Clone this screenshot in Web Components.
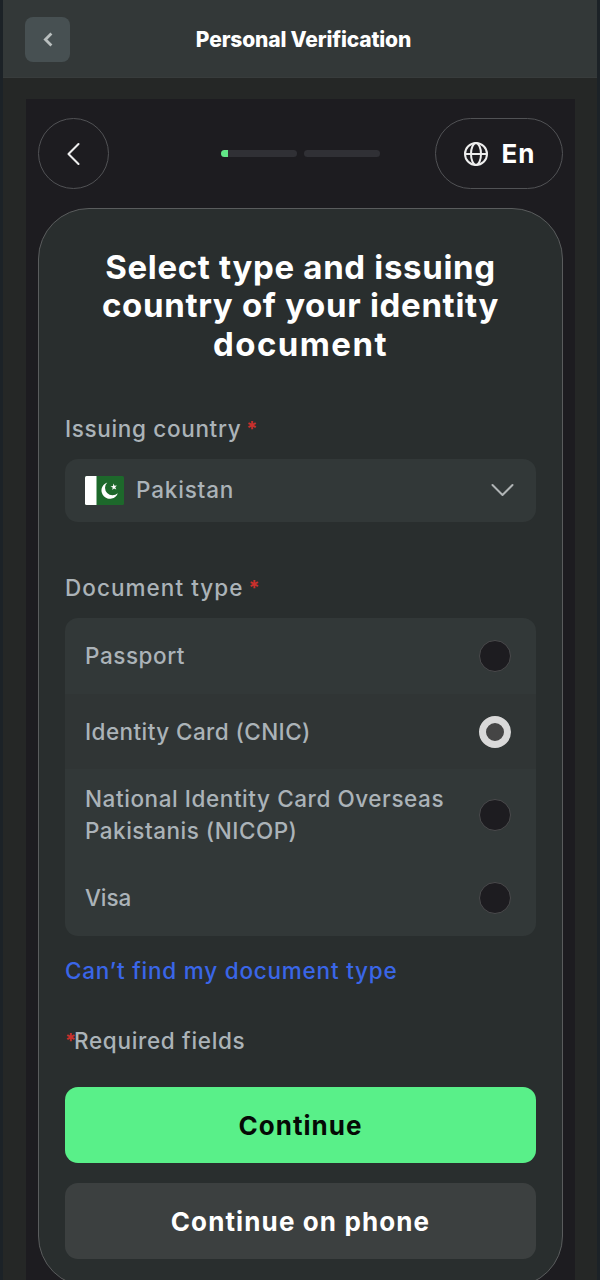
<!DOCTYPE html>
<html lang="en">
<head>
<meta charset="utf-8">
<title>Personal Verification</title>
<style>
    html, body {
        margin: 0;
        height: 1280px;
        overflow: hidden;
        background: #1c2227;
    }

    body {
        --panel: #1d1c20;
        --card: #292e2e;
        --field: #323838;
        --line: #4b4c4e;
        --muted: #abb3b8;
        --green: #59f089;
        --red: #c9302c;
        font-family: Inter, "Liberation Sans", sans-serif;
        color: #fff;
    }
</style>
</head>
<body>
<verify-page>
    <app-header slot="header">Personal Verification</app-header>
    <step-bar slot="top" lang-label="En"></step-bar>
    <verify-card>
        <card-title>
            <span style="letter-spacing: 0.66px">Select type and issuing</span>
            <span style="letter-spacing: 0.69px">country of your identity</span>
            <span style="letter-spacing: 1.45px">document</span>
        </card-title>
        <form-field label="Issuing country" spacing="0.66px">
            <country-select><span style="letter-spacing: 0.82px">Pakistan</span></country-select>
        </form-field>
        <form-field label="Document type" spacing="1.05px" style="margin-top: 50px">
            <option-list>
                <option-row style="height: 76px; letter-spacing: 0.55px">Passport</option-row>
                <option-row checked style="height: 75px; letter-spacing: 0.42px">Identity Card (CNIC)</option-row>
                <option-row style="height: 91px">
                    <span style="letter-spacing: 0.57px">National Identity Card Overseas</span><br>
                    <span style="letter-spacing: 0.5px">Pakistanis (NICOP)</span>
                </option-row>
                <option-row style="height: 76px; letter-spacing: -0.1px">Visa</option-row>
            </option-list>
        </form-field>
        <text-link>Can’t find my document type</text-link>
        <required-note>Required fields</required-note>
        <action-button primary style="letter-spacing: 1px">Continue</action-button>
        <action-button style="letter-spacing: 1.12px">Continue on phone</action-button>
    </verify-card>
</verify-page>

<script>
(function () {
    // Base class: clones the markup of the subclass into an open shadow root
    class BaseElement extends HTMLElement {
        constructor() {
            super();
            const template = document.createElement('template');
            template.innerHTML = this.constructor.markup;
            this.shadowroot = this.attachShadow({ mode: 'open' });
            this.shadowroot.appendChild(template.content.cloneNode(true));
        }
    }

    class VerifyPage extends BaseElement {
        static markup = `
        <style>
            :host {
                display: block;
                height: 1280px;
                margin: 0 3px;
                background: #252726;
                overflow: hidden;
            }

            .panel {
                box-sizing: border-box;
                height: 1181px;
                margin: 21px 22px 0 23px;
                padding: 19px 12px 0;
                background: var(--panel);
            }
        </style>
        <slot name="header"></slot>
        <div class="panel">
            <slot name="top"></slot>
            <slot></slot>
        </div>`;
    }

    class AppHeader extends BaseElement {
        static markup = `
        <style>
            :host {
                box-sizing: border-box;
                display: grid;
                grid-template-columns: 45px 1fr 45px;
                align-items: center;
                height: 78px;
                padding: 2px 22px 0;
                background: #333838;
                border-bottom: 1px solid #383c3c;
            }

            button {
                display: grid;
                place-items: center;
                width: 45px;
                height: 45px;
                padding: 0;
                border: 0;
                border-radius: 8px;
                background: #475052;
            }

            h1 {
                margin: 0;
                padding-left: 7px;
                text-align: center;
                font-size: 21px;
                font-weight: 800;
                line-height: 30px;
                letter-spacing: -0.16px;
            }
        </style>
        <button aria-label="Back">
            <svg width="14" height="16" viewBox="0 0 14 16" fill="none" stroke="#b9bfbf" stroke-width="2.8"><path d="M10.400 1.500 4.400 7.500l6 6"/></svg>
        </button>
        <h1><slot></slot></h1>`;
    }

    class StepBar extends BaseElement {
        static markup = `
        <style>
            :host {
                display: flex;
                align-items: center;
                justify-content: space-between;
                height: 71px;
                margin-bottom: 19px;
            }

            button {
                box-sizing: border-box;
                display: flex;
                align-items: center;
                justify-content: center;
                width: 71px;
                height: 71px;
                padding: 0;
                border: 1px solid #515255;
                border-radius: 36px;
                background: none;
                color: #fff;
                font: 700 26px Inter, sans-serif;
            }

            .lang {
                width: 128px;
                gap: 13px;
                letter-spacing: 1px;
            }

            .steps {
                display: flex;
                gap: 7px;
                margin-left: 57px;
            }

            .step {
                width: 76px;
                height: 7px;
                border-radius: 4px;
                background: #303035;
                overflow: hidden;
            }

            .step i {
                display: block;
                width: 7px;
                height: 7px;
                background: #62e687;
            }
        </style>
        <button aria-label="Previous step">
            <svg width="16" height="24" viewBox="0 0 16 24" fill="none" stroke="#eee" stroke-width="2.100" stroke-linecap="round" stroke-linejoin="round"><path d="M12.500 2 2.500 12l10 10"/></svg>
        </button>
        <div class="steps">
            <div class="step"><i></i></div>
            <div class="step"></div>
        </div>
        <button class="lang">
            <svg width="26" height="26" viewBox="0 0 26 26" fill="none" stroke="#eee" stroke-width="2">
                <circle cx="13" cy="13" r="11"/>
                <ellipse cx="13" cy="13" rx="5" ry="11"/>
                <path d="M2 13h22"/>
            </svg>
            <span></span>
        </button>`;

        connectedCallback() {
            this.shadowroot.querySelector('span').textContent = this.getAttribute('lang-label');
        }
    }

    class VerifyCard extends BaseElement {
        static markup = `
        <style>
            :host {
                box-sizing: border-box;
                display: block;
                height: 1079px;
                padding: 39px 26px 26px;
                border: 1px solid #5a5c5d;
                border-radius: 51px;
                background: var(--card);
            }
        </style>
        <slot></slot>`;
    }

    class CardTitle extends BaseElement {
        static markup = `
        <style>
            :host {
                display: block;
                margin-bottom: 50px;
            }

            h2 {
                display: flex;
                flex-direction: column;
                margin: 0;
                text-align: center;
                font-size: 33px;
                font-weight: 700;
                line-height: 38.4px;
                white-space: nowrap;
            }
        </style>
        <h2><slot></slot></h2>`;
    }

    class FormField extends BaseElement {
        static markup = `
        <style>
            :host {
                display: block;
                font-size: 22.5px;
                font-weight: 500;
                line-height: 32px;
                color: var(--muted);
            }

            .label {
                display: flex;
                gap: 5px;
                height: 32px;
                margin-bottom: 14px;
            }

            .star {
                color: var(--red);
                font-size: 20px;
                font-weight: 700;
            }
        </style>
        <div class="label"><span class="text"></span><span class="star">*</span></div>
        <slot></slot>`;

        connectedCallback() {
            const text = this.shadowroot.querySelector('.text');
            text.textContent = this.getAttribute('label');
            text.style.letterSpacing = this.getAttribute('spacing');
        }
    }

    class CountrySelect extends BaseElement {
        static markup = `
        <style>
            :host {
                box-sizing: border-box;
                display: flex;
                align-items: center;
                height: 63px;
                padding: 0 21px 1px 20px;
                border-radius: 13px;
                background: var(--field);
            }

            .name {
                flex: 1;
                margin-left: 12px;
            }
        </style>
        <svg width="39" height="29" viewBox="0 0 39 29">
            <rect width="39" height="29" rx="1.5" fill="#1d682b"/>
            <path d="M1.5 0H11.5V29H1.5Q0 29 0 27.500V1.500Q0 0 1.500 0Z" fill="#fff"/>
            <path d="M22.300 6.400A8.400 8.400 0 1 0 32.800 17.200A7.200 7.200 0 1 1 22.300 6.400Z" fill="#fff"/>
            <path d="m28.400 7.600 1.100 2.200 2.400-.300-1.700 1.800 1.100 2.200-2.300-1.100-1.700 1.700.400-2.500-2.200-1.200 2.500-.400Z" fill="#fff"/>
        </svg>
        <span class="name"><slot></slot></span>
        <svg width="24" height="14" viewBox="0 0 24 14" fill="none" stroke="#b0b4b5" stroke-width="2" stroke-linecap="round" stroke-linejoin="round"><path d="M1.500 2l10 10L21.500 2"/></svg>`;
    }

    class OptionList extends BaseElement {
        static markup = `
        <style>
            :host {
                display: block;
                border-radius: 13px;
                background: var(--field);
                overflow: hidden;
            }
        </style>
        <slot></slot>`;
    }

    class OptionRow extends BaseElement {
        static markup = `
        <style>
            :host {
                box-sizing: border-box;
                display: flex;
                align-items: center;
                justify-content: space-between;
                padding: 0 25px 0 20px;
                white-space: nowrap;
            }

            :host([checked]) {
                background: #303535;
            }

            .radio {
                box-sizing: border-box;
                width: 32px;
                height: 32px;
                border: 1px solid #4a4a4c;
                border-radius: 50%;
                background: var(--panel);
            }

            :host([checked]) .radio {
                border: 7px solid #d9d9d9;
                background: #454545;
            }
        </style>
        <div><slot></slot></div>
        <div class="radio"></div>`;
    }

    class TextLink extends BaseElement {
        static markup = `
        <style>
            :host {
                display: block;
                margin-top: 19px;
                font-size: 22.5px;
                font-weight: 500;
                line-height: 32px;
                letter-spacing: 0.78px;
                color: #3a66e8;
            }
        </style>
        <slot></slot>`;
    }

    class RequiredNote extends BaseElement {
        static markup = `
        <style>
            :host {
                display: flex;
                height: 32px;
                margin: 38px 0 30px;
                font-size: 22.5px;
                font-weight: 500;
                line-height: 32px;
                letter-spacing: 0.68px;
                color: var(--muted);
            }

            .star {
                width: 9px;
                color: var(--red);
                font-size: 20px;
                font-weight: 700;
                letter-spacing: 0;
            }
        </style>
        <span class="star">*</span><span><slot></slot></span>`;
    }

    class ActionButton extends BaseElement {
        static markup = `
        <style>
            :host {
                display: block;
                margin-bottom: 20px;
            }

            button {
                display: block;
                width: 100%;
                height: 76px;
                padding: 0;
                border: 0;
                border-radius: 13px;
                background: #3c4040;
                color: #fff;
                font: 700 26px Inter, sans-serif;
                letter-spacing: inherit;
            }

            :host([primary]) button {
                background: var(--green);
                color: #050a06;
            }
        </style>
        <button><slot></slot></button>`;
    }

    customElements.define('verify-page', VerifyPage);
    customElements.define('app-header', AppHeader);
    customElements.define('step-bar', StepBar);
    customElements.define('verify-card', VerifyCard);
    customElements.define('card-title', CardTitle);
    customElements.define('form-field', FormField);
    customElements.define('country-select', CountrySelect);
    customElements.define('option-list', OptionList);
    customElements.define('option-row', OptionRow);
    customElements.define('text-link', TextLink);
    customElements.define('required-note', RequiredNote);
    customElements.define('action-button', ActionButton);
})();
</script>
</body>
</html>
